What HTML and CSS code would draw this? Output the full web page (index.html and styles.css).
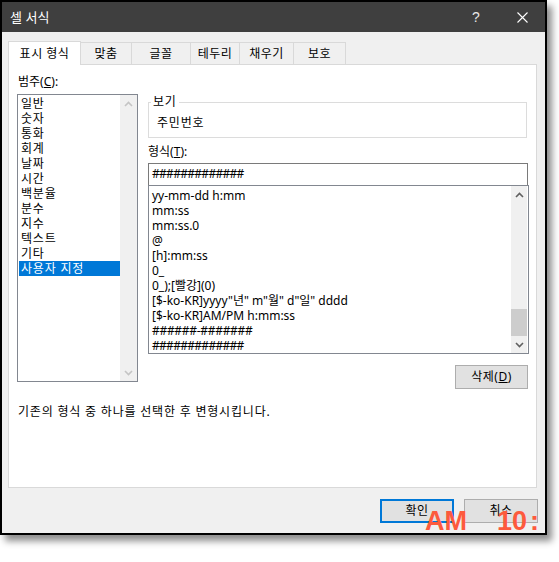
FILE: index.html
```html
<!DOCTYPE html>
<html lang="ko">
<head>
<meta charset="utf-8">
<title>셀 서식</title>
<link rel="stylesheet" href="styles.css">
</head>
<body>
<div class="window">
  <div class="titlebar">
    <span class="title">셀 서식</span>
    <span class="tbtn help">?</span>
    <span class="tbtn close"><svg width="11" height="11" viewBox="0 0 11 11"><path d="M0.5 0.5L10.5 10.5M10.5 0.5L0.5 10.5" stroke="#fff" stroke-width="1.1" fill="none"/></svg></span>
  </div>
  <div class="body">
    <div class="tabs">
      <div class="tab active t1">표시 형식</div>
      <div class="tab t2">맞춤</div>
      <div class="tab t3">글꼴</div>
      <div class="tab t4">테두리</div>
      <div class="tab t5">채우기</div>
      <div class="tab t6">보호</div>
    </div>
    <div class="panel">
      <div class="cols">
        <div class="left">
          <div class="lbl">범주(<u>C</u>):</div>
          <div class="catlist">
            <ul class="items">
              <li>일반</li>
              <li>숫자</li>
              <li>통화</li>
              <li>회계</li>
              <li>날짜</li>
              <li>시간</li>
              <li>백분율</li>
              <li>분수</li>
              <li>지수</li>
              <li>텍스트</li>
              <li>기타</li>
              <li class="sel">사용자 지정</li>
            </ul>
            <div class="vscroll off">
              <div class="arrow"><svg width="9" height="6" viewBox="0 0 9 6"><path d="M1 5L4.5 1.5L8 5" stroke="currentColor" stroke-width="1.6" fill="none"/></svg></div>
              <div class="track"></div>
              <div class="arrow"><svg width="9" height="6" viewBox="0 0 9 6"><path d="M1 1L4.5 4.5L8 1" stroke="currentColor" stroke-width="1.6" fill="none"/></svg></div>
            </div>
          </div>
        </div>
        <div class="right">
          <fieldset class="preview">
            <legend>보기</legend>
            <div class="sample">주민번호</div>
          </fieldset>
          <div class="lbl fmt-lbl">형식(<u>T</u>):</div>
          <div class="input hash">#############</div>
          <div class="fmtlist">
            <ul class="items">
              <li>yy-mm-dd h:mm</li>
              <li>mm:ss</li>
              <li>mm:ss.0</li>
              <li>@</li>
              <li>[h]:mm:ss</li>
              <li>0_</li>
              <li>0_);[빨강](0)</li>
              <li>[$-ko-KR]yyyy"년" m"월" d"일" dddd</li>
              <li>[$-ko-KR]AM/PM h:mm:ss</li>
              <li class="hash dashed">######-#######</li>
              <li class="hash">#############</li>
            </ul>
            <div class="vscroll">
              <div class="arrow"><svg width="9" height="6" viewBox="0 0 9 6"><path d="M1 5L4.5 1.5L8 5" stroke="currentColor" stroke-width="1.6" fill="none"/></svg></div>
              <div class="track"><div class="thumb"></div></div>
              <div class="arrow"><svg width="9" height="6" viewBox="0 0 9 6"><path d="M1 1L4.5 4.5L8 1" stroke="currentColor" stroke-width="1.6" fill="none"/></svg></div>
            </div>
          </div>
          <div class="delrow"><button class="btn del">삭제(<u>D</u>)</button></div>
        </div>
      </div>
      <p class="desc">기존의 형식 중 하나를 선택한 후 변형시킵니다.</p>
    </div>
    <div class="footer">
      <button class="btn ok">확인</button>
      <button class="btn">취소</button>
    </div>
  </div>
  <div class="clock">AM    10<span class="colon">:</span></div>
</div>
</body>
</html>
```
FILE: styles.css
```css
* { box-sizing: border-box; }
html, body { margin: 0; padding: 0; background: #fff; }
body {
  font-family: "Noto Sans", "Noto Sans CJK KR", sans-serif;
  font-size: 12px;
  color: #000;
  width: 559px;
  height: 562px;
  overflow: hidden;
}
.window {
  position: relative;
  width: 547px;
  height: 535px;
  border: 2px solid #000;
  background: #f0f0f0;
  box-shadow: 5px 6px 7px rgba(0, 0, 0, 0.45);
  display: flex;
  flex-direction: column;
}
.titlebar {
  height: 30px;
  background: #3f3f3f;
  color: #fff;
  display: flex;
  align-items: center;
  padding-left: 8px;
}
.title {
  flex: 1;
  font-size: 13px;
  font-family: "Noto Sans CJK KR", sans-serif;
  line-height: 16px;
}
.tbtn {
  width: 46px;
  height: 30px;
  display: flex;
  align-items: center;
  justify-content: center;
}
.help { font-size: 14px; font-family: "Liberation Sans", sans-serif; color: #e8e8e8; }
.body {
  flex: 1;
  display: flex;
  flex-direction: column;
  padding: 9px 8px 0 6px;
}
.tabs {
  display: flex;
  align-items: flex-end;
  height: 23px;
}
.tab {
  height: 22px;
  border: 1px solid #d9d9d9;
  border-bottom: none;
  margin-left: -1px;
  display: flex;
  align-items: center;
  justify-content: center;
  line-height: 16px;
  background: #f0f0f0;
  letter-spacing: 0.5px;
}
.tab.active {
  height: 24px;
  margin-bottom: -1px;
  margin-left: 0;
  background: #fff;
  position: relative;
  z-index: 1;
}
.t1 { width: 73px; }
.t2 { width: 52px; }
.t3 { width: 60px; }
.t4 { width: 50px; }
.t5 { width: 55px; }
.t6 { width: 53px; }
.panel {
  width: 529px;
  height: 424px;
  border: 1px solid #d9d9d9;
  background: #fff;
  padding: 9px 7px 0 8px;
}
.cols { display: flex; gap: 10px; }
.left { width: 121px; }
.right { width: 381px; margin-top: 20px; }
.lbl { line-height: 16px; padding-left: 1px; }
.left .lbl { margin-bottom: 4px; }
.items { list-style: none; margin: 0; padding: 0; flex: 1; }
.items li { height: 15px; line-height: 15px; white-space: nowrap; }
.catlist {
  height: 288px;
  border: 1px solid #828790;
  display: flex;
}
.catlist .items { padding: 1px 0 0 1px; }
.catlist li { padding-left: 2px; letter-spacing: 0.8px; }
.catlist li.sel { background: #0078d7; color: #fff; }
.vscroll {
  width: 17px;
  background: #f0f0f0;
  display: flex;
  flex-direction: column;
  color: #606060;
}
.vscroll.off { color: #c4c4c4; }
.arrow {
  height: 17px;
  display: flex;
  align-items: center;
  justify-content: center;
}
.track {
  flex: 1;
  display: flex;
  flex-direction: column;
  justify-content: flex-end;
}
.thumb { height: 27px; background: #cdcdcd; }
.preview {
  margin: 0 2px 0 0;
  min-width: 0;
  border: 1px solid #dcdcdc;
  padding: 0 2px 6px;
}
.preview legend {
  padding: 0 2px;
  line-height: 16px;
  letter-spacing: 0.8px;
}
.sample { padding: 5px 0 0 6px; line-height: 16px; letter-spacing: 0.8px; }
.fmt-lbl { margin-top: 6px; padding-left: 0; }
.input {
  margin-top: 3px;
  margin-right: 1px;
  height: 23px;
  border: 1px solid #7a7a7a;
  padding-left: 3px;
  line-height: 20px;
  background: #fff;
}
.hash { letter-spacing: -0.7px; }
.items li.dashed { letter-spacing: -0.3px; }
.fmtlist {
  margin-top: -1px;
  height: 169px;
  border: 1px solid #828790;
  display: flex;
}
.fmtlist .items { padding: 2px 0 0 3px; }
.fmtlist .vscroll { width: 16px; margin-right: 1px; }
.delrow {
  margin-top: 11px;
  display: flex;
  justify-content: flex-end;
  padding-right: 1px;
}
.btn {
  font-family: "Noto Sans", "Noto Sans CJK KR", sans-serif;
  font-size: 12px;
  color: #000;
  width: 74px;
  height: 24px;
  background: #e1e1e1;
  border: 1px solid #adadad;
  padding: 0;
  line-height: 16px;
  letter-spacing: 0.5px;
}
.del { width: 73px; }
.ok { border: 2px solid #0078d7; }
.desc {
  margin: 15px 0 0;
  padding-left: 1px;
  line-height: 16px;
  letter-spacing: 0.8px;
}
.footer {
  margin-top: 11px;
  margin-right: -1px;
  display: flex;
  justify-content: flex-end;
  gap: 10px;
}
.clock {
  position: absolute;
  left: 423px;
  top: 506px;
  font-family: "Liberation Sans", Arial, sans-serif;
  font-weight: bold;
  font-size: 27px;
  line-height: 27px;
  color: #fd5a3d;
  white-space: pre;
}
.colon { margin-left: 3px; }
```
